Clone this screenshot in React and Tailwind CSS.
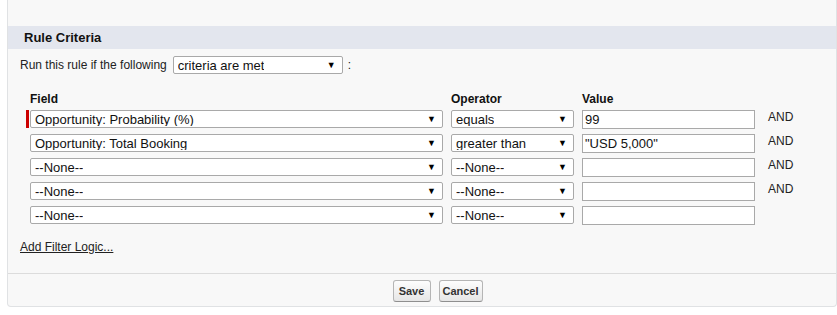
import React from "react";

function Select({ text, width }) {
  return (
    <div
      className={`${width} h-[18px] bg-white border border-[#a9a9a9] rounded-[2px] flex items-center justify-between pl-[4px] pr-[6px] text-[13px] leading-none text-[#111]`}
    >
      <span className="truncate">{text}</span>
      <span className="text-[9px] leading-none text-black">▼</span>
    </div>
  );
}

function Input({ value }) {
  return (
    <div className="w-[173px] h-[19px] bg-white border border-[#a9a9a9] flex items-center pl-[2px] text-[13px] leading-none text-[#111]">
      {value}
    </div>
  );
}

const rows = [
  { field: "Opportunity: Probability (%)", op: "equals", val: "99", and: true, req: true },
  { field: "Opportunity: Total Booking", op: "greater than", val: '"USD 5,000"', and: true },
  { field: "--None--", op: "--None--", val: "", and: true },
  { field: "--None--", op: "--None--", val: "", and: true },
  { field: "--None--", op: "--None--", val: "", and: false },
];

export default function App() {
  return (
    <div className="w-[837px] h-[315px] bg-white font-['Liberation_Sans',Arial,sans-serif] text-black overflow-hidden">
      <div className="ml-[7px] w-[830px] bg-[#f8f8f8] border-l border-r border-b border-[#e0e2e4] rounded-b-[4px]">
        <div className="h-[26px]" />
        <div className="h-[23px] bg-[#e3e6ee] pl-[16px] flex items-center font-bold text-[13px] text-[#111]">
          Rule Criteria
        </div>
        <div className="mt-[7px] pl-[12px] flex items-center text-[12px] text-[#222]">
          <span>Run this rule if the following</span>
          <div className="ml-[6px]">
            <Select text="criteria are met" width="w-[170px]" />
          </div>
          <span className="ml-[5px]">:</span>
        </div>

        <div className="mt-[18px] pl-[18px] grid grid-cols-[417px_123px_173px_auto] gap-x-[8px] gap-y-[5px] items-start">
          <div className="pl-[4px] h-[13px] text-[12px] leading-[14px] font-bold text-[#111]">Field</div>
          <div className="h-[13px] text-[12px] leading-[14px] font-bold text-[#111]">Operator</div>
          <div className="h-[13px] text-[12px] leading-[14px] font-bold text-[#111]">Value</div>
          <div />
          {rows.map((r, i) => (
            <React.Fragment key={i}>
              <div className="flex items-start">
                <div className={`w-[3px] h-[18px] ${r.req ? "bg-[#c00]" : ""}`} />
                <div className="ml-[1px]">
                  <Select text={r.field} width="w-[413px]" />
                </div>
              </div>
              <Select text={r.op} width="w-[123px]" />
              <Input value={r.val} />
              <div className="pl-[5px] text-[12px] leading-[14px] text-[#222]">{r.and ? "AND" : ""}</div>
            </React.Fragment>
          ))}
        </div>

        <div className="mt-[15px] pl-[12px] text-[12px] leading-[14px]">
          <a className="underline text-[#222]">Add Filter Logic...</a>
        </div>

        <div className="mt-[19px] border-t border-[#dcdcdc] pt-[6px] pb-[4px] pl-[31px] flex justify-center gap-[8px]">
          <button className="w-[38px] h-[22px] rounded-[3px] border border-[#b5b5b5] border-b-[#8f8f8f] bg-gradient-to-b from-[#fdfdfd] to-[#e6e6e6] text-[11px] font-bold text-[#333]">
            Save
          </button>
          <button className="w-[44px] h-[22px] rounded-[3px] border border-[#b5b5b5] border-b-[#8f8f8f] bg-gradient-to-b from-[#fdfdfd] to-[#e6e6e6] text-[11px] font-bold text-[#333]">
            Cancel
          </button>
        </div>
      </div>
    </div>
  );
}
